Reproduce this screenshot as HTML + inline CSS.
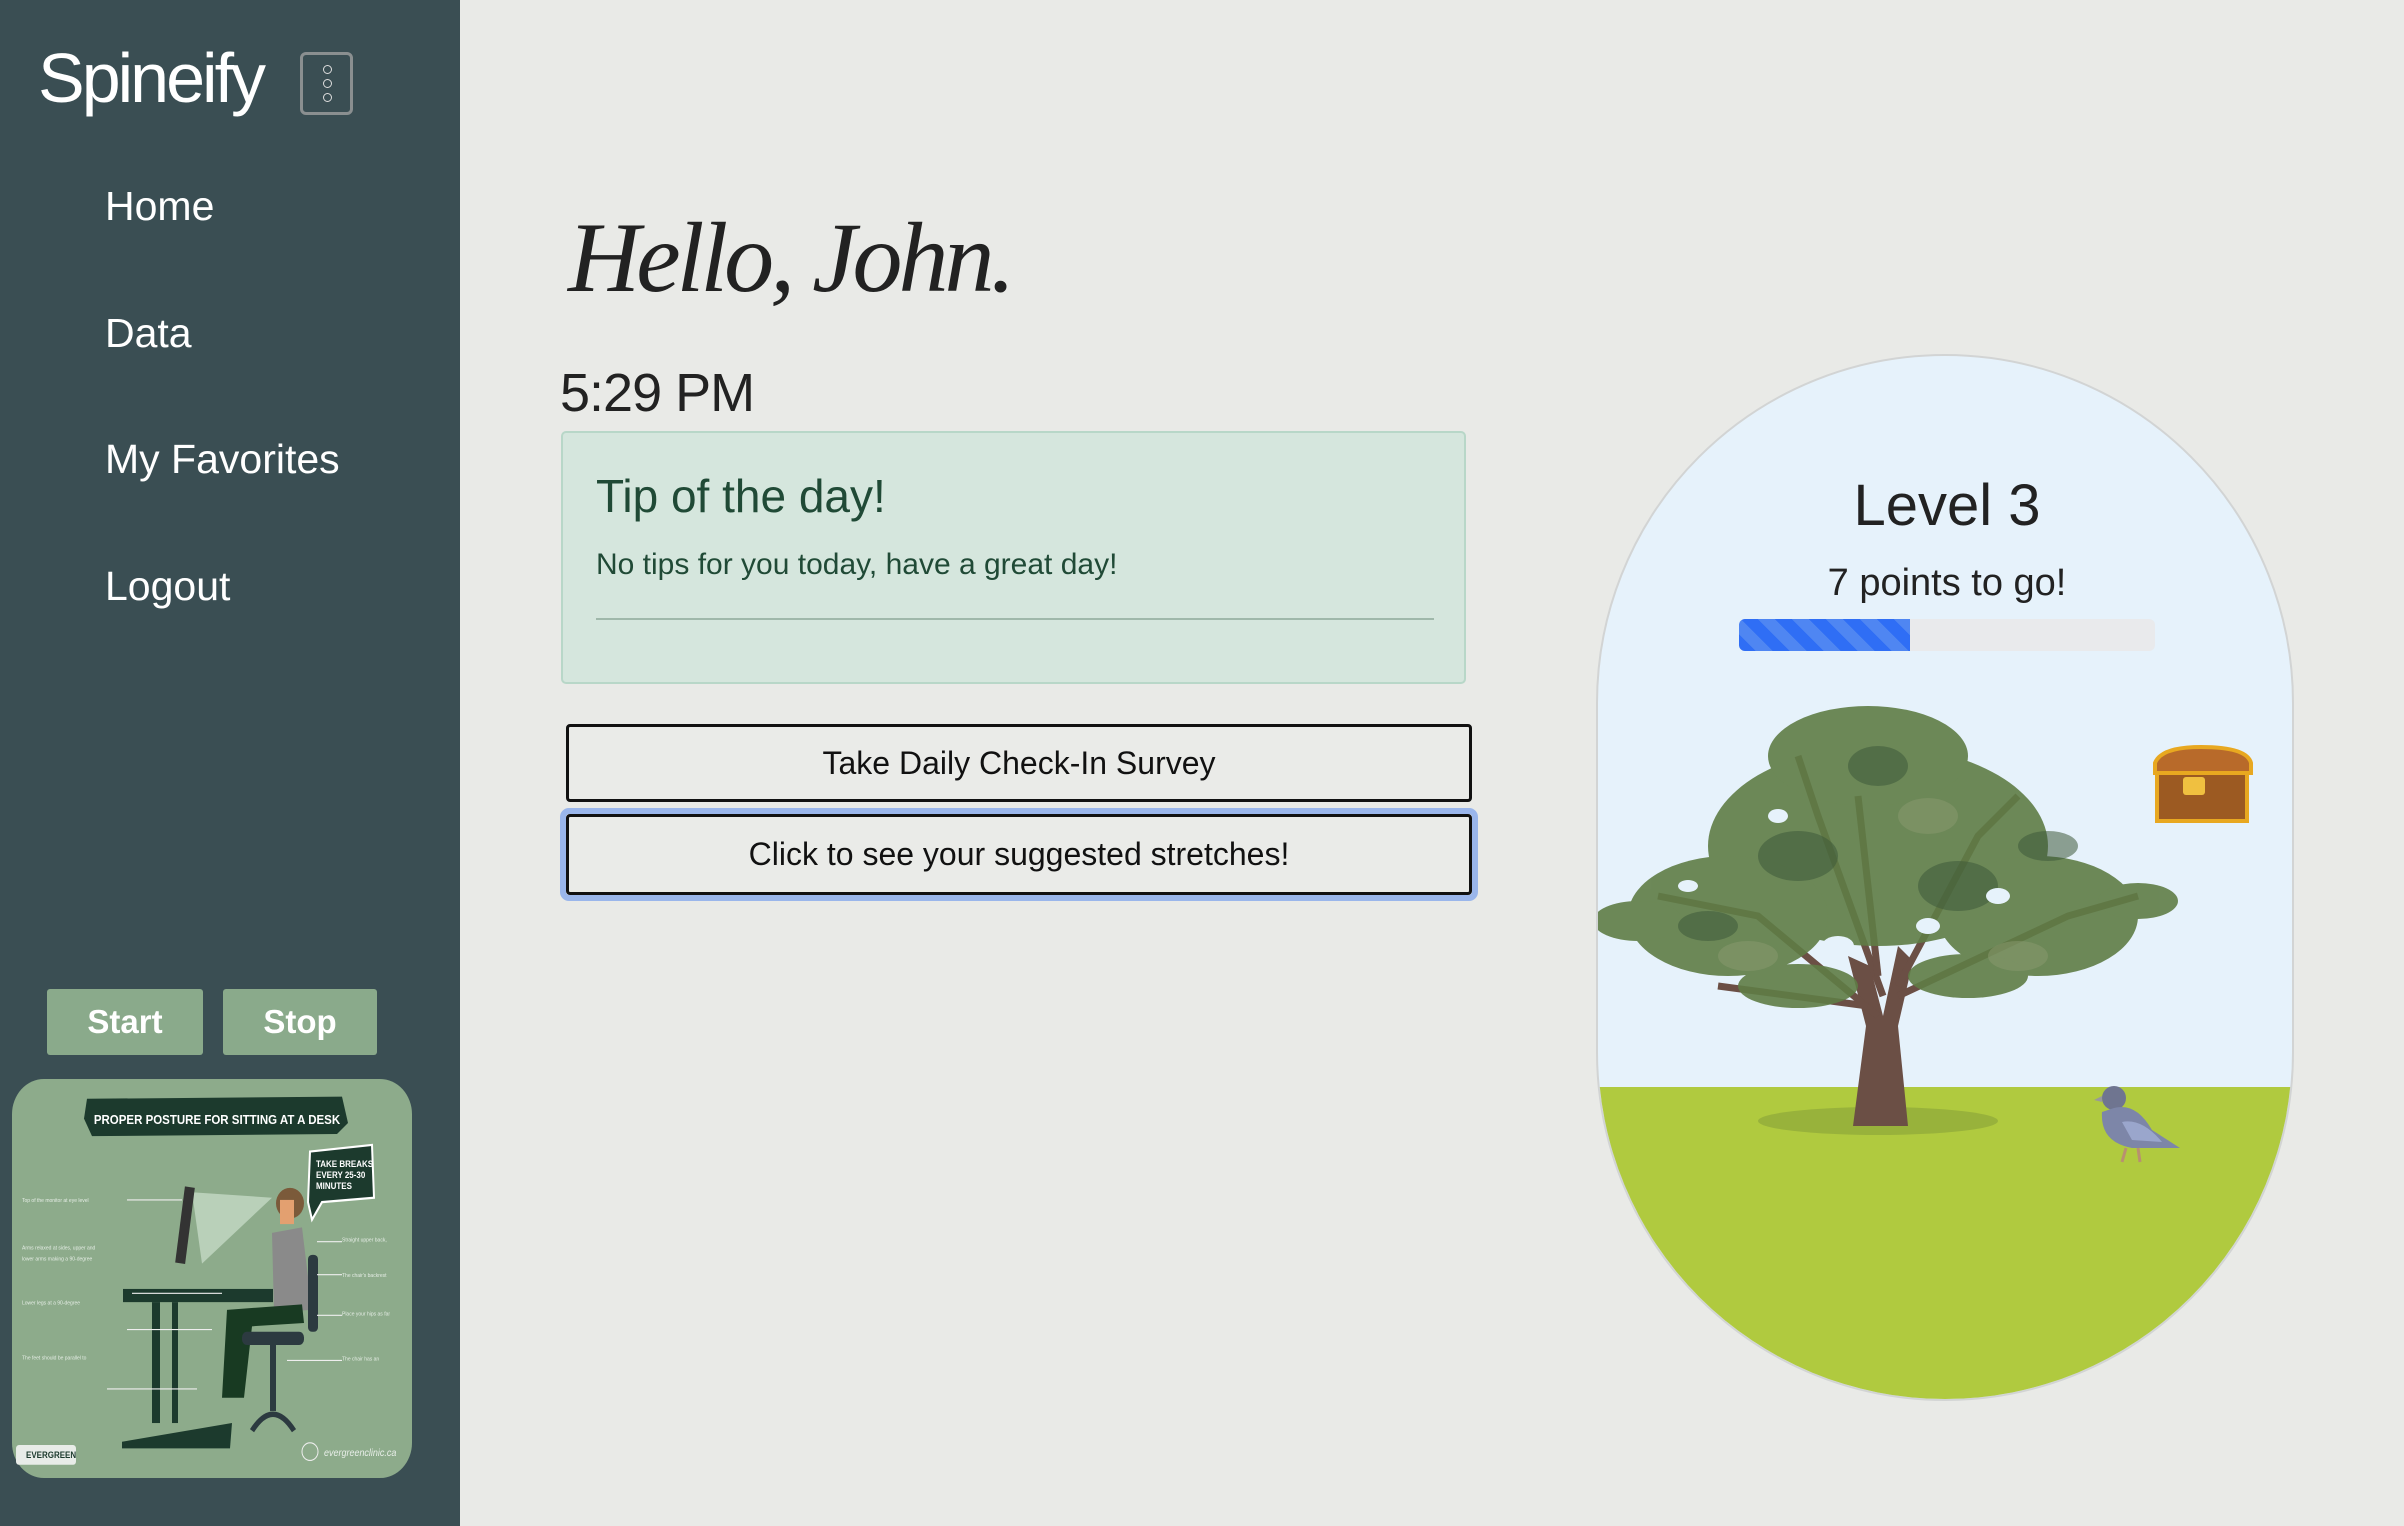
<!DOCTYPE html>
<html><head><meta charset="utf-8"><style>
*{margin:0;padding:0;box-sizing:border-box}
body{width:2404px;height:1526px;background:#e9eae7;font-family:"Liberation Sans",sans-serif;position:relative;overflow:hidden}
.side{position:absolute;left:0;top:0;width:460px;height:1526px;background:#3a4e53}
.logo{position:absolute;left:38px;top:38px;font-size:70px;color:#fff;font-weight:300;letter-spacing:-3px}
.menu{position:absolute;left:300px;top:52px;width:53px;height:63px;border:3px solid #8a8f90;border-radius:6px}
.menu i{position:absolute;left:20px;width:9px;height:9px;border:1.5px solid #ddd;border-radius:50%}
.nav{position:absolute;left:105px;color:#fff;font-size:41px}
.btn{position:absolute;top:989px;height:66px;background:#8aaa8b;color:#fff;font-size:33px;font-weight:bold;text-align:center;line-height:66px;border-radius:3px}
.abs{position:absolute}
.b{position:absolute;left:566px;width:906px;border:3px solid #111;border-radius:4px;background:#eaebe8;text-align:center;font-size:32px;color:#111;font-family:"Liberation Sans Narrow","Liberation Sans",sans-serif}
</style></head><body>
<div class="side">
 <div class="logo">Spineify</div>
 <div class="menu"><i style="top:10px"></i><i style="top:24px"></i><i style="top:38px"></i></div>
 <div class="nav" style="top:183px">Home</div>
 <div class="nav" style="top:310px">Data</div>
 <div class="nav" style="top:436px">My Favorites</div>
 <div class="nav" style="top:563px">Logout</div>
 <div class="btn" style="left:47px;width:156px">Start</div>
 <div class="btn" style="left:223px;width:154px">Stop</div>
 <svg class="abs" style="left:12px;top:1079px" width="400" height="399" viewBox="0 0 400 363" preserveAspectRatio="none">
  <rect width="400" height="363" rx="32" fill="#8dab8b"/>
  <path d="M75 18 L330 16 L336 40 L325 50 L80 52 L72 36Z" fill="#1c3a2d"/>
  <text x="205" y="41" font-size="11.5" fill="#fff" font-weight="bold" text-anchor="middle" font-family="Liberation Sans Narrow,Liberation Sans,sans-serif">PROPER POSTURE FOR SITTING AT A DESK</text>
  <path d="M298 66 L360 60 L362 108 L310 112 L300 128 L296 112Z" fill="#1c3a2d" stroke="#fff" stroke-width="2"/>
  <text x="304" y="80" font-size="8" fill="#fff" font-weight="bold">TAKE BREAKS</text>
  <text x="304" y="90" font-size="8" fill="#fff" font-weight="bold">EVERY 25-30</text>
  <text x="304" y="100" font-size="8" fill="#fff" font-weight="bold">MINUTES</text>
  <polygon points="180,103 260,108 190,168" fill="#c4d9c4" opacity=".8"/>
  <rect x="168" y="98" width="10" height="70" fill="#333" transform="rotate(8 173 133)"/>
  <rect x="111" y="191" width="150" height="12" fill="#1c3a2d"/>
  <rect x="140" y="203" width="8" height="110" fill="#1c3a2d"/>
  <rect x="160" y="203" width="6" height="110" fill="#1c3a2d"/>
  <polygon points="110,330 220,313 218,336 110,336" fill="#1c3a2d"/>
  <circle cx="278" cy="113" r="14" fill="#7b5a3a"/><rect x="268" y="110" width="14" height="22" fill="#e3a070"/>
  <path d="M260 140 L290 135 L300 210 L262 212Z" fill="#8a8a8a"/>
  <path d="M215 210 L290 205 L292 222 L240 225 L232 290 L210 290Z" fill="#183a22"/>
  <rect x="296" y="160" width="10" height="70" rx="4" fill="#2c3a40"/>
  <rect x="230" y="230" width="62" height="12" rx="5" fill="#2c3a40"/>
  <rect x="258" y="242" width="6" height="60" fill="#2c3a40"/>
  <path d="M240 320 Q261 290 282 320" stroke="#2c3a40" stroke-width="5" fill="none"/>
  <g stroke="#eee" stroke-width="1"><line x1="115" y1="110" x2="170" y2="110"/><line x1="120" y1="195" x2="210" y2="195"/><line x1="115" y1="228" x2="200" y2="228"/><line x1="95" y1="282" x2="185" y2="282"/><line x1="305" y1="148" x2="330" y2="148"/><line x1="305" y1="178" x2="330" y2="178"/><line x1="305" y1="215" x2="330" y2="215"/><line x1="275" y1="256" x2="330" y2="256"/></g>
  <g fill="#e5ede5" font-size="5"><text x="10" y="112">Top of the monitor at eye level</text><text x="10" y="155">Arms relaxed at sides, upper and</text><text x="10" y="165">lower arms making a 90-degree</text><text x="10" y="205">Lower legs at a 90-degree</text><text x="10" y="255">The feet should be parallel to</text><text x="330" y="148">Straight upper back,</text><text x="330" y="180">The chair's backrest</text><text x="330" y="215">Place your hips as far</text><text x="330" y="256">The chair has an</text></g>
  <rect x="4" y="333" width="60" height="18" rx="3" fill="#e8ece8"/>
  <text x="14" y="345" font-size="8" fill="#1c3a2d" font-weight="bold">EVERGREEN</text>
  <circle cx="298" cy="339" r="8" fill="none" stroke="#eee"/>
  <text x="312" y="343" font-size="9" fill="#e8eee8" font-style="italic">evergreenclinic.ca</text>
 </svg>
</div>
<div class="abs" style="left:568px;top:200px;font-family:'Liberation Serif',serif;font-style:italic;font-size:100px;color:#222;letter-spacing:-4px">Hello, John.</div>
<div class="abs" style="left:560px;top:362px;font-size:54px;color:#222;letter-spacing:-1px">5:29 PM</div>
<div class="abs" style="left:561px;top:431px;width:905px;height:253px;background:#d5e6dd;border:2px solid #b8d7c8;border-radius:5px">
 <div class="abs" style="left:33px;top:36px;font-size:46px;color:#204a36">Tip of the day!</div>
 <div class="abs" style="left:33px;top:115px;font-size:30px;color:#204a36">No tips for you today, have a great day!</div>
 <div class="abs" style="left:33px;top:185px;width:838px;height:2px;background:#9fb8aa"></div>
</div>
<div class="b" style="top:724px;height:78px;line-height:72px">Take Daily Check-In Survey</div>
<div class="abs" style="left:560px;top:808px;width:918px;height:93px;border:6px solid #9ab6eb;border-radius:9px"></div>
<div class="b" style="top:814px;height:81px;line-height:75px">Click to see your suggested stretches!</div>

<div class="abs" style="left:1596px;top:354px;width:698px;height:1047px;border-radius:349px;overflow:hidden;background:#e6f2fb;border:2px solid #d2d4d4">
 <div class="abs" style="left:0;top:731px;width:698px;height:320px;background:#b0ca3f"></div>
 <div class="abs" style="left:0;top:116px;width:698px;text-align:center;font-size:58px;color:#222">Level 3</div>
 <div class="abs" style="left:0;top:206px;width:698px;text-align:center;font-size:38px;color:#222">7 points to go!</div>
 <div class="abs" style="left:141px;top:263px;width:416px;height:32px;background:#e9eaec;border-radius:6px;overflow:hidden">
  <div style="width:171px;height:32px;background:repeating-linear-gradient(45deg,#2f6ef5 0 12px,#4f86f2 12px 24px)"></div>
 </div>
 <svg class="abs" style="left:0;top:340px" width="698" height="500" viewBox="0 0 698 500">
  <ellipse cx="280" cy="425" rx="120" ry="14" fill="#8fa83a" opacity=".7"/>
  <path d="M255 430 L268 330 L250 260 L272 270 L285 320 L300 250 L315 265 L300 330 L310 430Z" fill="#6b4f45"/>
  <g stroke="#6b4f45" stroke-width="7" fill="none"><path d="M280 320 L160 220 L60 200"/><path d="M285 300 L220 120 L200 60"/><path d="M300 290 L380 140 L420 100"/><path d="M300 300 L470 220 L540 200"/><path d="M280 280 L260 100"/><path d="M270 310 L120 290"/></g>
  <g fill="#5f7d46" opacity=".9">
   <ellipse cx="280" cy="150" rx="170" ry="100"/>
   <ellipse cx="130" cy="220" rx="100" ry="60"/>
   <ellipse cx="440" cy="220" rx="100" ry="60"/>
   <ellipse cx="270" cy="60" rx="100" ry="50"/>
   <ellipse cx="40" cy="225" rx="45" ry="20"/>
   <ellipse cx="540" cy="205" rx="40" ry="18"/>
   <ellipse cx="200" cy="290" rx="60" ry="22"/>
   <ellipse cx="370" cy="280" rx="60" ry="22"/>
  </g>
  <g fill="#3e5a3a" opacity=".55"><ellipse cx="200" cy="160" rx="40" ry="25"/><ellipse cx="360" cy="190" rx="40" ry="25"/><ellipse cx="280" cy="70" rx="30" ry="20"/><ellipse cx="110" cy="230" rx="30" ry="15"/><ellipse cx="450" cy="150" rx="30" ry="15"/></g>
  <g fill="#8a9a70" opacity=".5"><ellipse cx="330" cy="120" rx="30" ry="18"/><ellipse cx="150" cy="260" rx="30" ry="15"/><ellipse cx="420" cy="260" rx="30" ry="15"/></g>
  <g fill="#e6f2fb"><ellipse cx="240" cy="250" rx="16" ry="10"/><ellipse cx="400" cy="200" rx="12" ry="8"/><ellipse cx="180" cy="120" rx="10" ry="7"/><ellipse cx="330" cy="230" rx="12" ry="8"/><ellipse cx="90" cy="190" rx="10" ry="6"/></g>
 </svg>
 <svg class="abs" style="left:553px;top:389px" width="104" height="82" viewBox="0 0 104 82">
  <path d="M4 18 Q10 2 50 2 Q96 2 100 18 L100 28 L4 28Z" fill="#b86a2a" stroke="#e8a820" stroke-width="4"/>
  <rect x="6" y="28" width="90" height="48" fill="#9c5a22" stroke="#e8a820" stroke-width="4"/>
  <rect x="32" y="32" width="22" height="18" rx="3" fill="#f0c040"/>
 </svg>
 <svg class="abs" style="left:494px;top:726px" width="92" height="90" viewBox="0 0 92 90">
  <circle cx="22" cy="16" r="12" fill="#6f7590"/>
  <path d="M10 30 Q8 60 40 66 L88 66 L60 48 Q44 20 22 26Z" fill="#7d86a8"/>
  <path d="M30 40 Q50 36 70 60 L40 58Z" fill="#9aa6cc"/>
  <path d="M10 14 L2 18 L10 20Z" fill="#999"/>
  <path d="M34 66 L30 80 M46 66 L48 80" stroke="#b89070" stroke-width="3"/>
 </svg>
</div>
</body></html>
